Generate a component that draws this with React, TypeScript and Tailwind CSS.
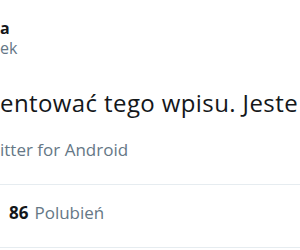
export default function App() {
  return (
    <div className="w-[300px] h-[250px] overflow-hidden bg-white font-['Open_Sans',sans-serif]">
      <div className="pt-[18px] flex flex-col">
        <span className="text-[16px] leading-[20px] font-bold text-[#14171a]">a</span>
        <span className="text-[16px] leading-[20px] text-[#657786]">ek</span>
      </div>
      <p className="mt-[30px] text-[24px] leading-[30px] tracking-[0.4px] whitespace-nowrap overflow-hidden text-[#14171a]">
        entować tego wpisu. Jeste
      </p>
      <p className="mt-[21px] text-[17px] leading-[22px] whitespace-nowrap text-[#657786]">
        itter for Android
      </p>
      <div className="mt-[23px] border-t border-[#e6ecf0]" />
      <div className="h-[62px] flex items-start pt-[17px] pl-[9px] text-[17px] leading-[22px]">
        <span className="font-bold text-[#14171a]">86</span>
        <span className="ml-[6px] text-[#657786]">Polubień</span>
      </div>
      <div className="border-t border-[#e6ecf0]" />
    </div>
  );
}
